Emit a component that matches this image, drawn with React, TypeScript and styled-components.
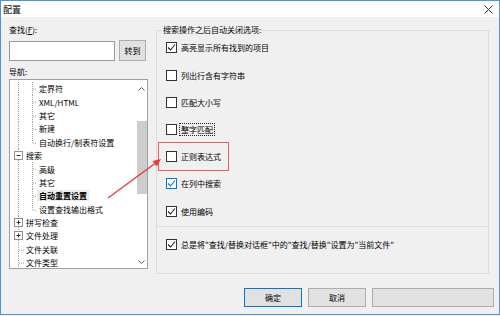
import styled, { createGlobalStyle, css } from "styled-components";

const GlobalStyle = createGlobalStyle`
  html, body {
    margin: 0;
    padding: 0;
    background: #f0f0f0;
  }
  body {
    font-family: "Noto Sans CJK SC", "Liberation Sans", sans-serif;
    font-size: 8px;
    color: #000;
  }
`;

const Window = styled.div`
  position: relative;
  width: 500px;
  height: 315px;
  box-sizing: border-box;
  border: 1px solid #4a95dc;
  background: #f0f0f0;
  display: flex;
  flex-direction: column;
`;

const TitleBar = styled.div`
  height: 16px;
  background: #fff;
  display: flex;
  align-items: center;
  justify-content: space-between;
  padding: 0 6px 0 2px;
  font-size: 9px;
`;

const Body = styled.div`
  display: flex;
  align-items: flex-start;
`;

const LeftPanel = styled.div`
  width: 139px;
  margin-left: 8px;
  display: flex;
  flex-direction: column;
`;

const FieldLabel = styled.div<{ $top: number }>`
  margin-top: ${(p) => p.$top}px;
  line-height: 12px;
  height: 12px;
`;

const SearchRow = styled.div`
  display: flex;
  align-items: center;
  gap: 4px;
  margin-top: 4px;
`;

const SearchInput = styled.div`
  width: 106px;
  height: 20px;
  box-sizing: border-box;
  border: 1px solid #9a9a9a;
  background: #fff;
`;

const GoButton = styled.div`
  width: 27px;
  height: 21px;
  box-sizing: border-box;
  border: 1px solid #adadad;
  background: #e1e1e1;
  display: flex;
  align-items: center;
  justify-content: center;
`;

const TreeBox = styled.div`
  margin-top: 1px;
  height: 190px;
  box-sizing: border-box;
  border: 1px solid #a0a0a0;
  background: #fff;
  display: flex;
`;

const TreeList = styled.div`
  flex: 1;
  padding-top: 2px;
  overflow: hidden;
`;

const TreeRow = styled.div`
  display: flex;
  align-items: center;
  height: 13.4px;
  white-space: nowrap;
`;

const TreeLabel = styled.span<{ $selected?: boolean }>`
  padding: 0 2px;
  line-height: 11px;
  ${(p) =>
    p.$selected &&
    css`
      font-weight: bold;
      background: #ececec;
    `}
`;

const ScrollBar = styled.div`
  width: 11px;
  display: flex;
  flex-direction: column;
  align-items: center;
`;

const ScrollArrow = styled.div<{ $h: number }>`
  height: ${(p) => p.$h}px;
  display: flex;
  align-items: center;
  justify-content: center;
`;

const ScrollThumb = styled.div`
  margin-top: 23px;
  width: 10px;
  height: 73px;
  background: #cdcdcd;
`;

const ScrollTrack = styled.div`
  flex: 1;
`;

const RightPanel = styled.div`
  width: 333px;
  margin-left: 8px;
  margin-top: 7px;
`;

const GroupBox = styled.fieldset`
  margin: 0;
  padding: 5px 0 8px 9px;
  border: 1px solid #dcdcdc;
  height: 203px;
  box-sizing: border-box;
  min-width: 0;
  display: flex;
  flex-direction: column;
  gap: 13.3px;
`;

const GroupLegend = styled.legend`
  margin-left: -4px;
  padding: 0 1px;
  line-height: 12px;
`;

const GroupTail = styled.div`
  height: 47px;
  box-sizing: border-box;
  border: 1px solid #dcdcdc;
  border-top: none;
  padding: 10px 0 0 9px;
`;

const Option = styled.div`
  display: flex;
  align-items: center;
  gap: 2px;
  height: 14px;
`;

const Box = styled.span<{ $hover?: boolean }>`
  width: 11px;
  height: 11px;
  box-sizing: border-box;
  border: 1px solid ${(p) => (p.$hover ? "#0078d7" : "#333")};
  background: #fff;
  display: flex;
  align-items: center;
  justify-content: center;
  flex-shrink: 0;
`;

const OptionText = styled.span<{ $focus?: boolean }>`
  line-height: 11px;
  padding: 0 1px;
  border: 1px solid transparent;
  ${(p) =>
    p.$focus &&
    css`
      border: 1px dotted #222;
    `}
`;

const Footer = styled.div`
  display: flex;
  justify-content: flex-end;
  gap: 6px;
  margin-top: 14px;
  padding-right: 5px;
`;

const DialogButton = styled.div<{ $w: number; $default?: boolean }>`
  width: ${(p) => p.$w}px;
  height: 19px;
  box-sizing: border-box;
  border: 1px solid ${(p) => (p.$default ? "#0078d7" : "#adadad")};
  background: #e1e1e1;
  display: flex;
  align-items: center;
  justify-content: center;
`;

const Annotation = styled.svg`
  position: absolute;
  left: -1px;
  top: -1px;
  pointer-events: none;
`;

type Node = {
  label: string;
  level: 0 | 1;
  kind?: "leaf" | "open" | "closed";
  last?: boolean;
  selected?: boolean;
};

const treeNodes: Node[] = [
  { label: "定界符", level: 1 },
  { label: "XML/HTML", level: 1 },
  { label: "其它", level: 1 },
  { label: "新建", level: 1 },
  { label: "自动换行/制表符设置", level: 1, last: true },
  { label: "搜索", level: 0, kind: "open" },
  { label: "高级", level: 1 },
  { label: "其它", level: 1 },
  { label: "自动重置设置", level: 1, selected: true },
  { label: "设置查找输出格式", level: 1, last: true },
  { label: "拼写检查", level: 0, kind: "closed" },
  { label: "文件处理", level: 0, kind: "closed" },
  { label: "文件关联", level: 0, kind: "leaf" },
  { label: "文件类型", level: 0, kind: "leaf" },
];

const options = [
  { label: "高亮显示所有找到的项目", checked: true },
  { label: "列出行含有字符串", checked: false },
  { label: "匹配大小写", checked: false },
  { label: "整字匹配", checked: false, focus: true },
  { label: "正则表达式", checked: false },
  { label: "在列中搜索", checked: true, hover: true },
  { label: "使用编码", checked: true },
];

const H = 13.4;
const MID = 6.7;
const dot = { stroke: "#a0a0a0", strokeWidth: 1, strokeDasharray: "1 1" };

function TreeLines({ node }: { node: Node }) {
  if (node.level === 1) {
    return (
      <svg width="27" height={H}>
        <line x1="8.5" y1="0" x2="8.5" y2={H} {...dot} />
        <line x1="22.5" y1="0" x2="22.5" y2={node.last ? MID : H} {...dot} />
        <line x1="23" y1={MID + 0.5} x2="27" y2={MID + 0.5} {...dot} />
      </svg>
    );
  }
  if (node.kind === "leaf") {
    return (
      <svg width="14" height={H}>
        <line x1="8.5" y1="0" x2="8.5" y2={H} {...dot} />
        <line x1="9" y1={MID + 0.5} x2="14" y2={MID + 0.5} {...dot} />
      </svg>
    );
  }
  return (
    <svg width="14" height={H}>
      <line x1="8.5" y1="0" x2="8.5" y2="2" {...dot} />
      <line x1="8.5" y1="11" x2="8.5" y2={H} {...dot} />
      <rect x="4.5" y="2.5" width="8" height="8" fill="#fff" stroke="#919191" />
      <line x1="6.5" y1="6.5" x2="10.5" y2="6.5" stroke="#333" />
      {node.kind === "closed" && <line x1="8.5" y1="4.5" x2="8.5" y2="8.5" stroke="#333" />}
    </svg>
  );
}

function Check({ on, blue }: { on: boolean; blue?: boolean }) {
  return (
    <Box $hover={blue}>
      {on && (
        <svg width="9" height="9" viewBox="0 0 9 9">
          <polyline
            points="1,4.5 3.5,7 8,1.5"
            fill="none"
            stroke={blue ? "#0078d7" : "#222"}
            strokeWidth="1.1"
          />
        </svg>
      )}
    </Box>
  );
}

function Chevron({ up }: { up?: boolean }) {
  return (
    <svg width="7" height="4" viewBox="0 0 7 4">
      <polyline
        points={up ? "0.5,3.5 3.5,0.5 6.5,3.5" : "0.5,0.5 3.5,3.5 6.5,0.5"}
        fill="none"
        stroke="#606060"
      />
    </svg>
  );
}

export default function App() {
  return (
    <>
      <GlobalStyle />
      <Window>
        <TitleBar>
          <span>配置</span>
          <svg width="9" height="9" viewBox="0 0 9 9">
            <path d="M0.5 0.5 L8.5 8.5 M8.5 0.5 L0.5 8.5" stroke="#333" />
          </svg>
        </TitleBar>
        <Body>
          <LeftPanel>
            <FieldLabel $top={7}>
              查找(<u>F</u>):
            </FieldLabel>
            <SearchRow>
              <SearchInput />
              <GoButton>转到</GoButton>
            </SearchRow>
            <FieldLabel $top={5}>导航:</FieldLabel>
            <TreeBox>
              <TreeList>
                {treeNodes.map((node, i) => (
                  <TreeRow key={i}>
                    <TreeLines node={node} />
                    <TreeLabel $selected={node.selected}>{node.label}</TreeLabel>
                  </TreeRow>
                ))}
              </TreeList>
              <ScrollBar>
                <ScrollArrow $h={18}>
                  <Chevron up />
                </ScrollArrow>
                <ScrollThumb />
                <ScrollTrack />
                <ScrollArrow $h={12}>
                  <Chevron />
                </ScrollArrow>
              </ScrollBar>
            </TreeBox>
          </LeftPanel>
          <RightPanel>
            <GroupBox>
              <GroupLegend>搜索操作之后自动关闭选项:</GroupLegend>
              {options.map((o) => (
                <Option key={o.label}>
                  <Check on={o.checked} blue={o.hover} />
                  <OptionText $focus={o.focus}>{o.label}</OptionText>
                </Option>
              ))}
            </GroupBox>
            <GroupTail>
              <Option>
                <Check on />
                <OptionText>
                  总是将"查找/替换对话框"中的"查找/替换"设置为"当前文件"
                </OptionText>
              </Option>
            </GroupTail>
          </RightPanel>
        </Body>
        <Footer>
          <DialogButton $w={58} $default>
            确定
          </DialogButton>
          <DialogButton $w={58}>取消</DialogButton>
          <DialogButton $w={122} />
        </Footer>
        <Annotation width="500" height="316">
          <rect x="158.5" y="142.5" width="70" height="28" fill="none" stroke="#ef5a5a" />
          <line x1="108" y1="198" x2="157" y2="162" stroke="#e83a3a" strokeWidth="1.4" />
          <polygon points="161,159 156.6,166.6 152.5,160.9" fill="#e83a3a" />
        </Annotation>
      </Window>
    </>
  );
}
